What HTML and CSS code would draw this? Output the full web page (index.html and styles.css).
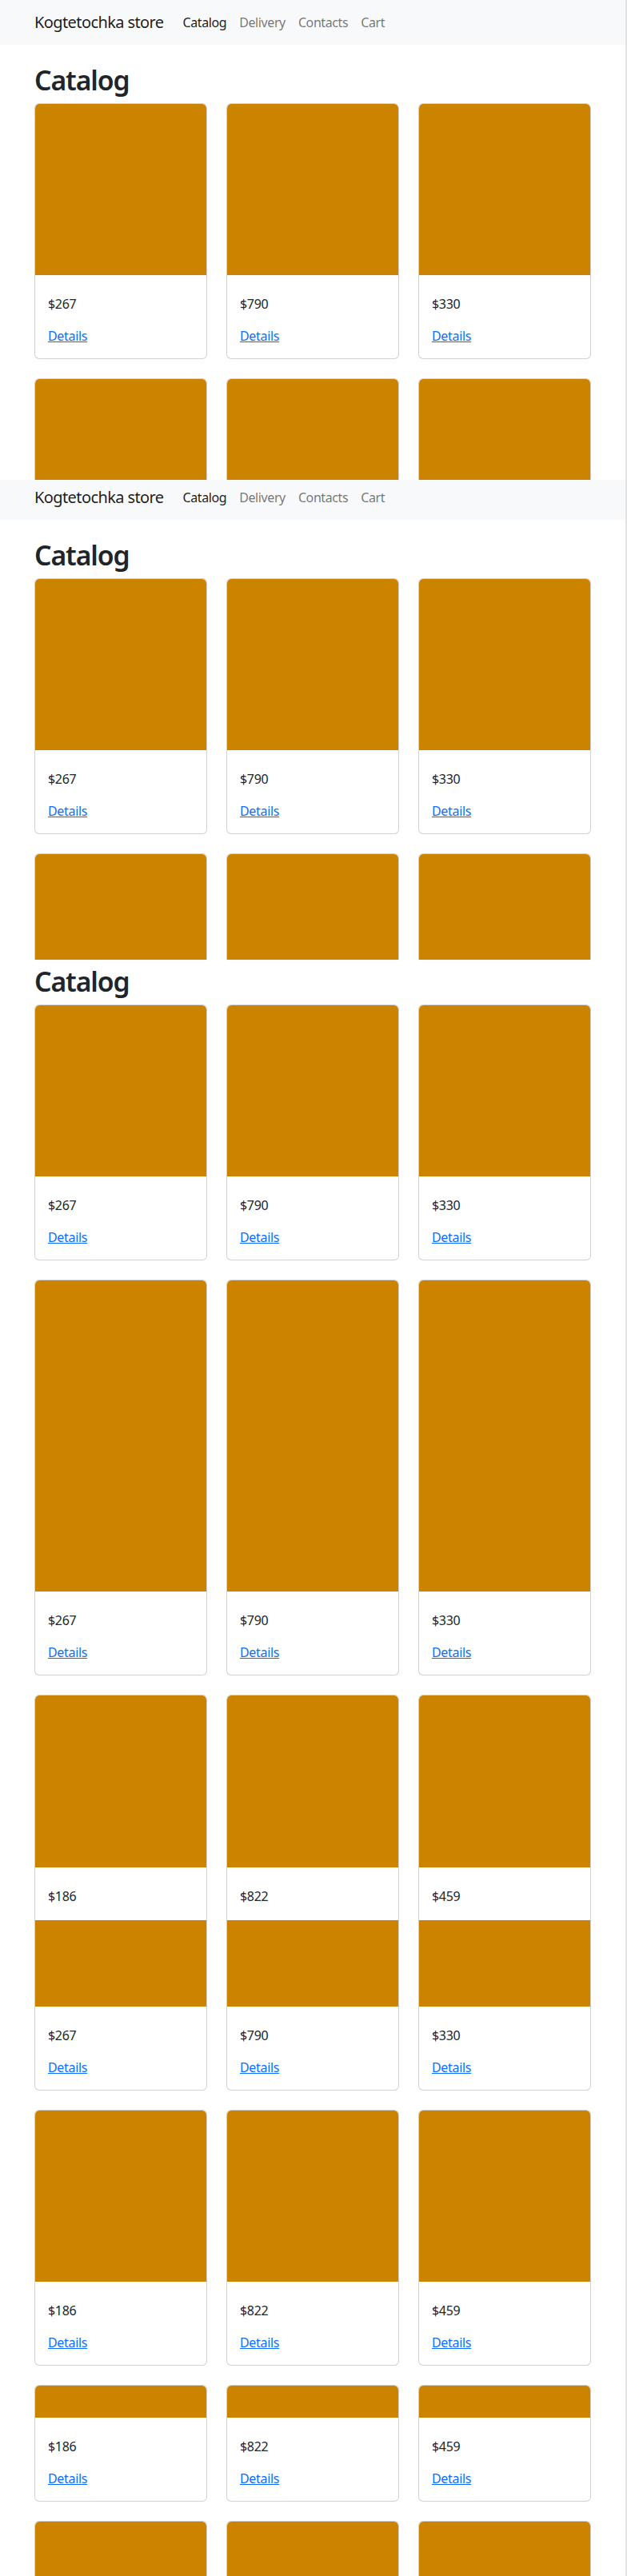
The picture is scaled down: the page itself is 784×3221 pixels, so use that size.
FILE: index.html
```html
<!DOCTYPE html>
<html lang="en">
<head>
<meta charset="utf-8">
<title>Kogtetochka store</title>
<link rel="stylesheet" href="styles.css">
</head>
<body>
<div class="shot">

  <!-- slice 1 -->
  <nav class="navbar">
    <div class="container nav-inner">
      <a class="brand" href="#">Kogtetochka store</a>
      <ul class="nav-links">
        <li><a class="nav-link active" href="#">Catalog</a></li>
        <li><a class="nav-link" href="#">Delivery</a></li>
        <li><a class="nav-link" href="#">Contacts</a></li>
        <li><a class="nav-link" href="#">Cart</a></li>
      </ul>
    </div>
  </nav>
  <main class="container main">
    <h1 class="title">Catalog</h1>
    <div class="stack">
      <div class="cards">
        <div class="card"><div class="card-img"></div><div class="card-body"><p class="price">$267</p><a class="details" href="#">Details</a></div></div>
        <div class="card"><div class="card-img"></div><div class="card-body"><p class="price">$790</p><a class="details" href="#">Details</a></div></div>
        <div class="card"><div class="card-img"></div><div class="card-body"><p class="price">$330</p><a class="details" href="#">Details</a></div></div>
      </div>
      <div class="clip clip-127">
        <div class="cards">
          <div class="card"><div class="card-img"></div></div>
          <div class="card"><div class="card-img"></div></div>
          <div class="card"><div class="card-img"></div></div>
        </div>
      </div>
    </div>
  </main>

  <!-- slice 2 -->
  <div class="nav-cut">
    <nav class="navbar">
      <div class="container nav-inner">
        <a class="brand" href="#">Kogtetochka store</a>
        <ul class="nav-links">
          <li><a class="nav-link active" href="#">Catalog</a></li>
          <li><a class="nav-link" href="#">Delivery</a></li>
          <li><a class="nav-link" href="#">Contacts</a></li>
          <li><a class="nav-link" href="#">Cart</a></li>
        </ul>
      </div>
    </nav>
  </div>
  <main class="container main">
    <h1 class="title">Catalog</h1>
    <div class="stack">
      <div class="cards">
        <div class="card"><div class="card-img"></div><div class="card-body"><p class="price">$267</p><a class="details" href="#">Details</a></div></div>
        <div class="card"><div class="card-img"></div><div class="card-body"><p class="price">$790</p><a class="details" href="#">Details</a></div></div>
        <div class="card"><div class="card-img"></div><div class="card-body"><p class="price">$330</p><a class="details" href="#">Details</a></div></div>
      </div>
      <div class="clip clip-133">
        <div class="cards">
          <div class="card"><div class="card-img"></div></div>
          <div class="card"><div class="card-img"></div></div>
          <div class="card"><div class="card-img"></div></div>
        </div>
      </div>
    </div>
  </main>

  <!-- slice 3 -->
  <main class="container main main-cut">
    <h1 class="title">Catalog</h1>
    <div class="stack">
      <div class="cards">
        <div class="card"><div class="card-img"></div><div class="card-body"><p class="price">$267</p><a class="details" href="#">Details</a></div></div>
        <div class="card"><div class="card-img"></div><div class="card-body"><p class="price">$790</p><a class="details" href="#">Details</a></div></div>
        <div class="card"><div class="card-img"></div><div class="card-body"><p class="price">$330</p><a class="details" href="#">Details</a></div></div>
      </div>
      <div class="cards">
        <div class="card"><div class="card-img img-tall"></div><div class="card-body"><p class="price">$267</p><a class="details" href="#">Details</a></div></div>
        <div class="card"><div class="card-img img-tall"></div><div class="card-body"><p class="price">$790</p><a class="details" href="#">Details</a></div></div>
        <div class="card"><div class="card-img img-tall"></div><div class="card-body"><p class="price">$330</p><a class="details" href="#">Details</a></div></div>
      </div>
      <div class="clip clip-282">
        <div class="cards">
          <div class="card"><div class="card-img img-b"></div><div class="card-body"><p class="price">$186</p></div></div>
          <div class="card"><div class="card-img img-b"></div><div class="card-body"><p class="price">$822</p></div></div>
          <div class="card"><div class="card-img img-b"></div><div class="card-body"><p class="price">$459</p></div></div>
        </div>
      </div>
    </div>
  </main>

  <!-- slice 4 -->
  <main class="container">
    <div class="stack">
      <div class="cards">
        <div class="card tail"><div class="card-img img-tail"></div><div class="card-body"><p class="price">$267</p><a class="details" href="#">Details</a></div></div>
        <div class="card tail"><div class="card-img img-tail"></div><div class="card-body"><p class="price">$790</p><a class="details" href="#">Details</a></div></div>
        <div class="card tail"><div class="card-img img-tail"></div><div class="card-body"><p class="price">$330</p><a class="details" href="#">Details</a></div></div>
      </div>
      <div class="cards">
        <div class="card"><div class="card-img"></div><div class="card-body"><p class="price">$186</p><a class="details" href="#">Details</a></div></div>
        <div class="card"><div class="card-img"></div><div class="card-body"><p class="price">$822</p><a class="details" href="#">Details</a></div></div>
        <div class="card"><div class="card-img"></div><div class="card-body"><p class="price">$459</p><a class="details" href="#">Details</a></div></div>
      </div>
      <div class="cards">
        <div class="card"><div class="card-img img-short"></div><div class="card-body"><p class="price">$186</p><a class="details" href="#">Details</a></div></div>
        <div class="card"><div class="card-img img-short"></div><div class="card-body"><p class="price">$822</p><a class="details" href="#">Details</a></div></div>
        <div class="card"><div class="card-img img-short"></div><div class="card-body"><p class="price">$459</p><a class="details" href="#">Details</a></div></div>
      </div>
      <div class="clip clip-70">
        <div class="cards">
          <div class="card"><div class="card-img"></div></div>
          <div class="card"><div class="card-img"></div></div>
          <div class="card"><div class="card-img"></div></div>
        </div>
      </div>
    </div>
  </main>

</div>
</body>
</html>
```

FILE: styles.css
```css
* {
  box-sizing: border-box;
}

html, body {
  margin: 0;
  padding: 0;
  background: #fff;
}

body {
  font-family: "Noto Sans", "Open Sans", "DejaVu Sans", sans-serif;
  font-size: 16px;
  line-height: 24px;
  letter-spacing: -0.02em;
  color: #212529;
}

.shot {
  height: 3221px;
  overflow: hidden;
  border-right: 2px solid #e2e2e2;
}

.container {
  width: 100%;
  max-width: 720px;
  margin: 0 auto;
  padding: 0 12px;
}

/* navbar */
.navbar {
  background: #f8f9fa;
  height: 56px;
  padding: 8px 0;
}

.nav-inner {
  display: flex;
  align-items: center;
  height: 40px;
}

.brand {
  font-size: 20px;
  line-height: 30px;
  letter-spacing: -0.6px;
  color: rgba(0, 0, 0, 0.9);
  text-decoration: none;
  margin-right: 16px;
  white-space: nowrap;
}

.nav-links {
  display: flex;
  list-style: none;
  margin: 0;
  padding: 0;
}

.nav-link {
  display: block;
  padding: 8px;
  line-height: 24px;
  letter-spacing: -0.4px;
  color: rgba(0, 0, 0, 0.55);
  text-decoration: none;
}

.nav-link.active {
  color: rgba(0, 0, 0, 0.9);
}

.nav-cut {
  height: 50px;
  overflow: hidden;
}

.nav-cut .navbar {
  margin-top: -6px;
}

/* main */
.main {
  padding-top: 24px;
}

.main-cut {
  padding-top: 7px;
}

.title {
  font-size: 33.76px;
  line-height: 41px;
  font-weight: 600;
  letter-spacing: -1.1px;
  margin: 0 0 8px;
  color: #212529;
}

.stack {
  display: flex;
  flex-direction: column;
  gap: 24px;
}

.cards {
  display: grid;
  grid-template-columns: repeat(3, 1fr);
  column-gap: 24px;
}

.clip {
  overflow: hidden;
}

.clip-127 { height: 127px; }
.clip-133 { height: 133px; }
.clip-282 { height: 282px; }
.clip-70 { height: 70px; }

/* card */
.card {
  background: #fff;
  border: 1px solid rgba(0, 0, 0, 0.175);
  border-radius: 6px;
  overflow: hidden;
}

.card-img {
  height: 214px;
  background: #cc8400;
  border-radius: 5px 5px 0 0;
}

.img-tall { height: 389px; }
.img-b { height: 215px; }
.img-short { height: 40px; }

.card.tail {
  border-top: 0;
  border-radius: 0 0 6px 6px;
}

.img-tail {
  height: 108px;
  border-radius: 0;
}

.card-body {
  padding: 24px 16px 16px;
}

.price {
  margin: 0 0 16px;
}

.details {
  color: #0d6efd;
  text-decoration: underline;
}
```
